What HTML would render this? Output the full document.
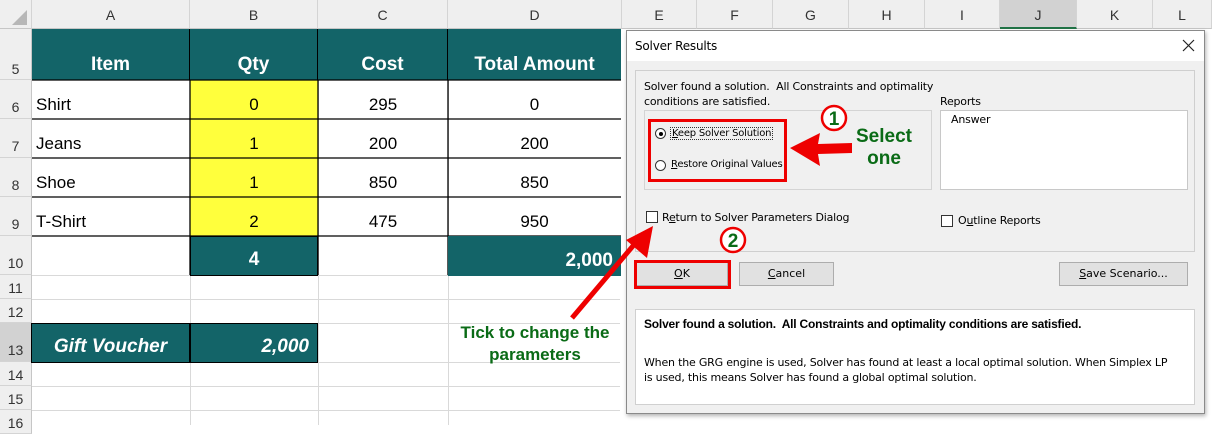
<!DOCTYPE html>
<html><head><meta charset="utf-8"><style>
*{margin:0;padding:0;box-sizing:border-box}
body{width:1212px;height:425px;overflow:hidden;background:#fff;font-family:"Liberation Sans",sans-serif;position:relative}
.a{position:absolute}
.ch{position:absolute;top:0;height:29px;background:#efefef;border-right:1px solid #d4d4d4;border-bottom:1px solid #c6c6c6;font-size:14px;color:#333;text-align:center;line-height:31px}
.rh{position:absolute;left:0;width:32px;background:#efefef;border-bottom:1px solid #d4d4d4;border-right:1px solid #c6c6c6;font-size:14px;color:#333;text-align:center}
.c{position:absolute;font-size:17px;color:#000;display:flex;align-items:flex-end;padding-bottom:4px}
.teal{background:#136468;color:#fff;font-weight:bold}
.dt{font-size:11px;color:#000;position:absolute;font-family:"DejaVu Sans","Liberation Sans",sans-serif;letter-spacing:-0.2px}
.btn{position:absolute;height:24px;background:#e1e1e1;border:1px solid #adadad;font-size:11px;text-align:center;line-height:22px;font-family:"DejaVu Sans",sans-serif}
.gr{color:#0a6b16;font-weight:bold;position:absolute;text-align:center}
</style></head><body>
<!-- gridlines -->
<svg class="a" style="left:0;top:0" width="1212" height="425">
<g stroke="#d9d9d9" stroke-width="1">
<line x1="190.5" y1="29" x2="190.5" y2="425"/><line x1="318.5" y1="29" x2="318.5" y2="425"/><line x1="448.5" y1="29" x2="448.5" y2="425"/>
<line x1="32" y1="275.5" x2="620" y2="275.5"/><line x1="32" y1="299.5" x2="620" y2="299.5"/><line x1="32" y1="323.5" x2="620" y2="323.5"/><line x1="32" y1="362.5" x2="620" y2="362.5"/><line x1="32" y1="386.5" x2="620" y2="386.5"/><line x1="32" y1="410.5" x2="620" y2="410.5"/>
</g></svg>
<div class="ch" style="left:0;width:32px"><svg width="32" height="29"><polygon points="27,10 27,25 12,25" fill="#b7b7b7"/></svg></div>
<div class="ch" style="left:32px;width:158px">A</div>
<div class="ch" style="left:190px;width:128px">B</div>
<div class="ch" style="left:318px;width:130px">C</div>
<div class="ch" style="left:448px;width:174px">D</div>
<div class="ch" style="left:622px;width:75px">E</div>
<div class="ch" style="left:697px;width:76px">F</div>
<div class="ch" style="left:773px;width:76px">G</div>
<div class="ch" style="left:849px;width:76px">H</div>
<div class="ch" style="left:925px;width:75px">I</div>
<div class="ch" style="left:1000px;width:77px;background:#d2d2d2;border-bottom:2px solid #217346">J</div>
<div class="ch" style="left:1077px;width:76px">K</div>
<div class="ch" style="left:1153px;width:59px">L</div>
<!-- row headers -->
<div class="rh" style="top:29px;height:51px;line-height:80px">5</div>
<div class="rh" style="top:80px;height:39px;line-height:54px">6</div>
<div class="rh" style="top:119px;height:39px;line-height:54px">7</div>
<div class="rh" style="top:158px;height:39px;line-height:54px">8</div>
<div class="rh" style="top:197px;height:39px;line-height:54px">9</div>
<div class="rh" style="top:236px;height:39px;line-height:54px">10</div>
<div class="rh" style="top:275px;height:24px;line-height:26px">11</div>
<div class="rh" style="top:299px;height:24px;line-height:26px">12</div>
<div class="rh" style="top:323px;height:39px;line-height:54px;background:#d2d2d2">13</div>
<div class="rh" style="top:362px;height:24px;line-height:26px">14</div>
<div class="rh" style="top:386px;height:24px;line-height:26px">15</div>
<div class="rh" style="top:410px;height:24px;line-height:26px">16</div>
<!-- header row -->
<div class="c teal" style="left:32px;top:29px;width:158px;height:51px;justify-content:center;font-size:19px;border-right:1px solid #000">Item</div>
<div class="c teal" style="left:190px;top:29px;width:128px;height:51px;justify-content:center;font-size:19px;border-right:1px solid #000">Qty</div>
<div class="c teal" style="left:318px;top:29px;width:130px;height:51px;justify-content:center;font-size:19px;border-right:1px solid #000">Cost</div>
<div class="c teal" style="left:448px;top:29px;width:173px;height:51px;justify-content:center;font-size:19px">Total Amount</div>
<!-- data -->
<div class="a" style="left:190px;top:80px;width:128px;height:156px;background:#ffff3c"></div>
<svg class="a" style="left:0;top:0" width="622" height="300"><g stroke="#000" stroke-width="1.3">
<line x1="32" y1="80" x2="621" y2="80"/><line x1="32" y1="119" x2="621" y2="119"/><line x1="32" y1="158" x2="621" y2="158"/><line x1="32" y1="197" x2="621" y2="197"/><line x1="32" y1="236" x2="621" y2="236"/>
<line x1="190" y1="80" x2="190" y2="275"/><line x1="318" y1="80" x2="318" y2="275"/><line x1="448" y1="80" x2="448" y2="275"/></g></svg>
<div class="c" style="left:36px;top:80px;height:39px">Shirt</div>
<div class="c" style="left:36px;top:119px;height:39px">Jeans</div>
<div class="c" style="left:36px;top:158px;height:39px">Shoe</div>
<div class="c" style="left:36px;top:197px;height:39px">T-Shirt</div>
<div class="c" style="left:190px;top:80px;width:128px;height:39px;justify-content:center">0</div>
<div class="c" style="left:190px;top:119px;width:128px;height:39px;justify-content:center">1</div>
<div class="c" style="left:190px;top:158px;width:128px;height:39px;justify-content:center">1</div>
<div class="c" style="left:190px;top:197px;width:128px;height:39px;justify-content:center">2</div>
<div class="c" style="left:318px;top:80px;width:130px;height:39px;justify-content:center">295</div>
<div class="c" style="left:318px;top:119px;width:130px;height:39px;justify-content:center">200</div>
<div class="c" style="left:318px;top:158px;width:130px;height:39px;justify-content:center">850</div>
<div class="c" style="left:318px;top:197px;width:130px;height:39px;justify-content:center">475</div>
<div class="c" style="left:448px;top:80px;width:173px;height:39px;justify-content:center">0</div>
<div class="c" style="left:448px;top:119px;width:173px;height:39px;justify-content:center">200</div>
<div class="c" style="left:448px;top:158px;width:173px;height:39px;justify-content:center">850</div>
<div class="c" style="left:448px;top:197px;width:173px;height:39px;justify-content:center">950</div>
<div class="c teal" style="left:190px;top:236px;width:128px;height:40px;justify-content:center;font-size:19px;border:1px solid #000">4</div>
<div class="c teal" style="left:448px;top:236px;width:173px;height:40px;justify-content:flex-end;padding-right:8px;font-size:19px">2,000</div>
<div class="c teal" style="left:31px;top:323px;width:159px;height:40px;justify-content:center;font-size:19px;font-style:italic;border:1px solid #000">Gift Voucher</div>
<div class="c teal" style="left:190px;top:323px;width:128px;height:40px;justify-content:flex-end;padding-right:8px;font-size:19px;font-style:italic;border:1px solid #000">2,000</div>
<div class="gr" style="left:440px;top:322px;width:190px;font-size:17px;line-height:22px">Tick to change the<br>parameters</div>
<!-- dialog -->
<div class="a" style="left:626px;top:30px;width:579px;height:384px;background:#f0f0f0;border:1px solid #8a8a8a;box-shadow:1px 2px 4px rgba(0,0,0,.3)"></div>
<div class="a" style="left:627px;top:31px;width:577px;height:30px;background:#fff"></div>
<div class="dt" style="left:635px;top:39px;font-size:12px">Solver Results</div>
<svg class="a" style="left:1182px;top:39px" width="13" height="13"><path d="M1 1L12 12M12 1L1 12" stroke="#222" stroke-width="1.2"/></svg>
<div class="a" style="left:635px;top:70px;width:560px;height:182px;border:1px solid #cfcfcf;background:#f0f0f0"></div>
<div class="dt" style="left:644px;top:79px;line-height:15px">Solver found a solution.&nbsp; All Constraints and optimality<br>conditions are satisfied.</div>
<div class="dt" style="left:940px;top:95px">Reports</div>
<div class="a" style="left:644px;top:110px;width:288px;height:80px;border:1px solid #d4d4d4"></div>
<div class="a" style="left:940px;top:110px;width:248px;height:80px;border:1px solid #c8c8c8;background:#fff"></div>
<div class="dt" style="left:951px;top:113px">Answer</div>
<div class="a" style="left:655px;top:128px;width:11px;height:11px;border:1px solid #333;border-radius:50%;background:#fff"><div class="a" style="left:3px;top:3px;width:4px;height:4px;border-radius:50%;background:#000"></div></div>
<div class="dt" style="left:670px;top:127px;font-size:10px;border:1px dotted #333;padding:0 1px"><u>K</u>eep Solver Solution</div>
<div class="a" style="left:655px;top:160px;width:11px;height:11px;border:1px solid #333;border-radius:50%;background:#fff"></div>
<div class="dt" style="left:671px;top:159px;font-size:10px"><u>R</u>estore Original Values</div>
<div class="a" style="left:648px;top:119px;width:139px;height:63px;border:3px solid #e00"></div>
<div class="a" style="left:646px;top:211px;width:12px;height:12px;border:1px solid #333;background:#fff"></div>
<div class="dt" style="left:662px;top:211px">R<u>e</u>turn to Solver Parameters Dialog</div>
<div class="a" style="left:941px;top:215px;width:12px;height:12px;border:1px solid #333;background:#fff"></div>
<div class="dt" style="left:958px;top:214px">O<u>u</u>tline Reports</div>
<div class="btn" style="left:636px;top:262px;width:92px"><u>O</u>K</div>
<div class="a" style="left:634px;top:260px;width:97px;height:29px;border:3px solid #e00"></div>
<div class="btn" style="left:739px;top:262px;width:95px"><u>C</u>ancel</div>
<div class="btn" style="left:1059px;top:262px;width:129px"><u>S</u>ave Scenario...</div>
<div class="a" style="left:635px;top:309px;width:560px;height:96px;background:#fff;border:1px solid #d0d0d0"></div>
<div class="dt" style="left:644px;top:317px;font-weight:bold;font-family:'Liberation Sans',sans-serif;font-size:12px">Solver found a solution.&nbsp; All Constraints and optimality conditions are satisfied.</div>
<div class="dt" style="left:644px;top:355px;line-height:15px">When the GRG engine is used, Solver has found at least a local optimal solution. When Simplex LP<br>is used, this means Solver has found a global optimal solution.</div>
<!-- annotations -->
<svg class="a" style="left:0;top:0" width="1212" height="425">
<circle cx="834" cy="118" r="12" fill="#fff" stroke="#e00" stroke-width="2.5"/>
<circle cx="733" cy="240" r="12" fill="#fff" stroke="#e00" stroke-width="2.5"/>
<polygon points="790,148 820,133 818,144 852,143 852,153 818,154 820,166" fill="#e00"/>
<line x1="572" y1="318" x2="638" y2="240" stroke="#e00" stroke-width="5"/>
<polygon points="653,226 647,258 626,240" fill="#e00"/>
<text x="834" y="125" font-family="Liberation Sans" font-size="19" font-weight="bold" fill="#0a6b16" text-anchor="middle">1</text>
<text x="733" y="247" font-family="Liberation Sans" font-size="19" font-weight="bold" fill="#0a6b16" text-anchor="middle">2</text>
</svg>
<div class="gr" style="left:844px;top:126px;width:80px;font-size:19px;line-height:22px">Select<br>one</div>
</body></html>
